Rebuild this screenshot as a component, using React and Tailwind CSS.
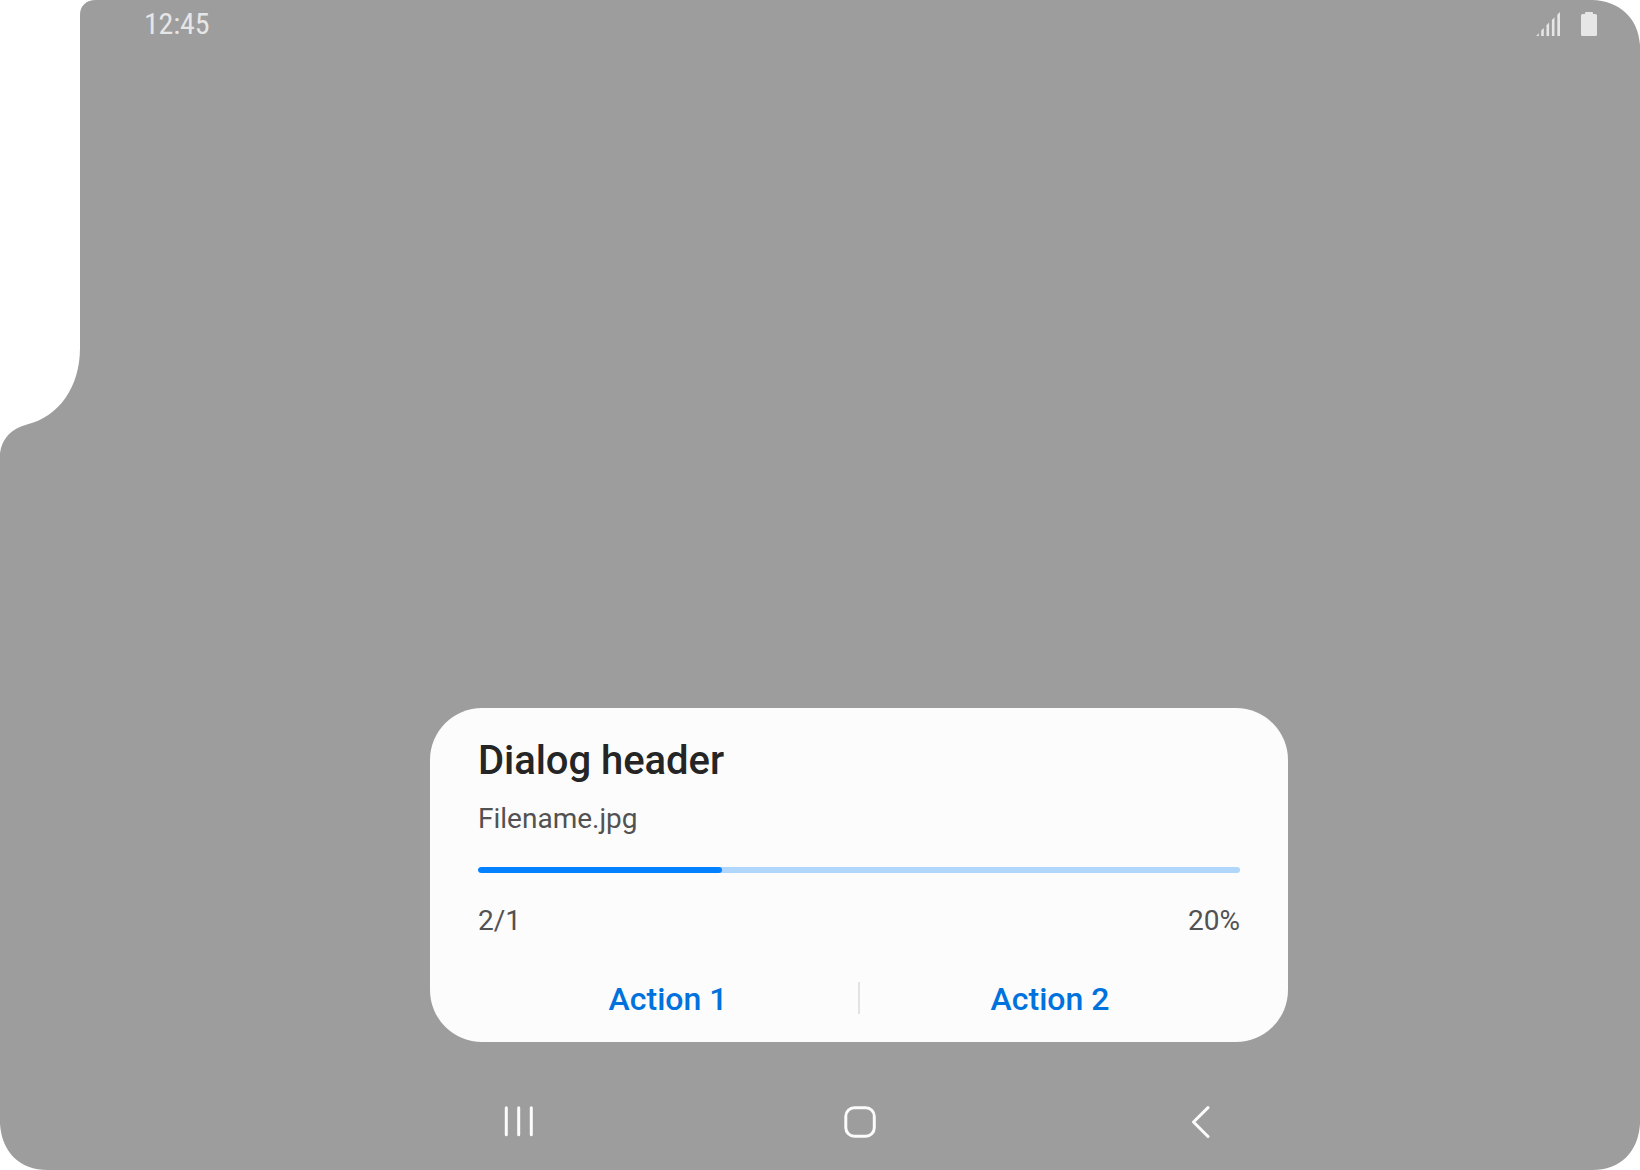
function ScreenShape() {
  return (
    <svg
      className="absolute inset-0 -z-10"
      width="1640"
      height="1170"
      viewBox="0 0 1640 1170"
      fill="#9d9d9d"
      aria-hidden="true"
    >
      <path d="M96 0H1592C1619 1 1638 17 1640 45V1124C1638 1152 1621 1170 1592 1170H48C19 1170 2 1152 0 1124V453C2 438 12 428 27 424.4C58 417 80 388 80 348V15C80 6 86 0 96 0Z" />
    </svg>
  );
}

function SignalIcon() {
  return (
    <svg width="24" height="24" viewBox="0 0 24 24" fill="#e6e6e6" aria-hidden="true">
      <path d="M0.2 24L2.8 21.3V24Z" />
      <path d="M5.2 24V18.6L7.8 15.9V24Z" />
      <path d="M10.5 24V13.3L13.1 10.6V24Z" />
      <path d="M15.9 24V7.9L18.5 5.2V24Z" />
      <path d="M21.3 24V2.7L24 0V24Z" />
    </svg>
  );
}

function BatteryIcon() {
  return (
    <svg width="16" height="24" viewBox="0 0 16 24" fill="#e6e6e6" aria-hidden="true">
      <path d="M5 0H11Q12 0 12 1V2H14.5Q16 2 16 3.5V22.5Q16 24 14.5 24H1.5Q0 24 0 22.5V3.5Q0 2 1.5 2H4V1Q4 0 5 0Z" />
    </svg>
  );
}

function StatusBar() {
  return (
    <header className="flex h-12 items-center justify-between pl-36 pr-[43px]">
      <span className="text-[30px] leading-none tracking-[-0.2px] text-[#e6e6e6] [font-stretch:75%]">
        12:45
      </span>
      <div className="flex items-center gap-[21px]">
        <SignalIcon />
        <BatteryIcon />
      </div>
    </header>
  );
}

function ProgressDialog() {
  return (
    <section
      role="dialog"
      className="flex h-[334px] w-[858px] flex-col rounded-[52px] bg-[#fcfcfc] px-12"
    >
      <h1 className="mt-[29px] text-[40px] font-medium leading-[48px] tracking-[-0.05px] text-[#252525]">
        Dialog header
      </h1>
      <p className="mt-[18px] text-[28px] leading-8 text-[#525252]">Filename.jpg</p>
      <div className="mt-8 h-1.5 w-[762px] overflow-hidden rounded-full bg-[#b0d6fb]">
        <div className="h-full w-[244px] rounded-full bg-[#0381fe]" />
      </div>
      <div className="mt-8 flex justify-between text-[28px] leading-8 text-[#525252]">
        <span>2/1</span>
        <span>20%</span>
      </div>
      <div className="mt-[45px] flex h-8 items-center text-[32px] font-medium leading-8 text-[#0072de]">
        <button className="flex-1 pt-0.5">Action 1</button>
        <span className="h-8 w-0.5 bg-[#e3e3e3]" />
        <button className="flex-1 pt-0.5">Action 2</button>
      </div>
    </section>
  );
}

function NavigationBar() {
  return (
    <nav className="flex h-24 items-center justify-center gap-[309px] pl-20">
      <svg width="32" height="32" viewBox="0 0 32 32" stroke="#fcfcfc" strokeWidth="3" strokeLinecap="round">
        <path d="M3.3 1.8V28.8M15.7 1.8V28.8M28.3 1.8V28.8" />
      </svg>
      <svg width="32" height="32" viewBox="0 0 32 32" fill="none" stroke="#fcfcfc" strokeWidth="3">
        <rect x="1.8" y="1.7" width="28.5" height="28.5" rx="8.5" />
      </svg>
      <svg width="32" height="32" viewBox="0 0 32 32" fill="none" stroke="#fcfcfc" strokeWidth="3" strokeLinecap="round" strokeLinejoin="round">
        <path d="M23 1.6L8.5 16L23 30.5" />
      </svg>
    </nav>
  );
}

export default function App() {
  return (
    <div className="bg-white">
      <div className="relative isolate flex h-[1170px] w-[1640px] flex-col overflow-hidden font-['Roboto',sans-serif]">
        <ScreenShape />
        <StatusBar />
        <main className="flex flex-1 items-end justify-center pb-8 pl-[78px]">
          <ProgressDialog />
        </main>
        <NavigationBar />
      </div>
    </div>
  );
}
